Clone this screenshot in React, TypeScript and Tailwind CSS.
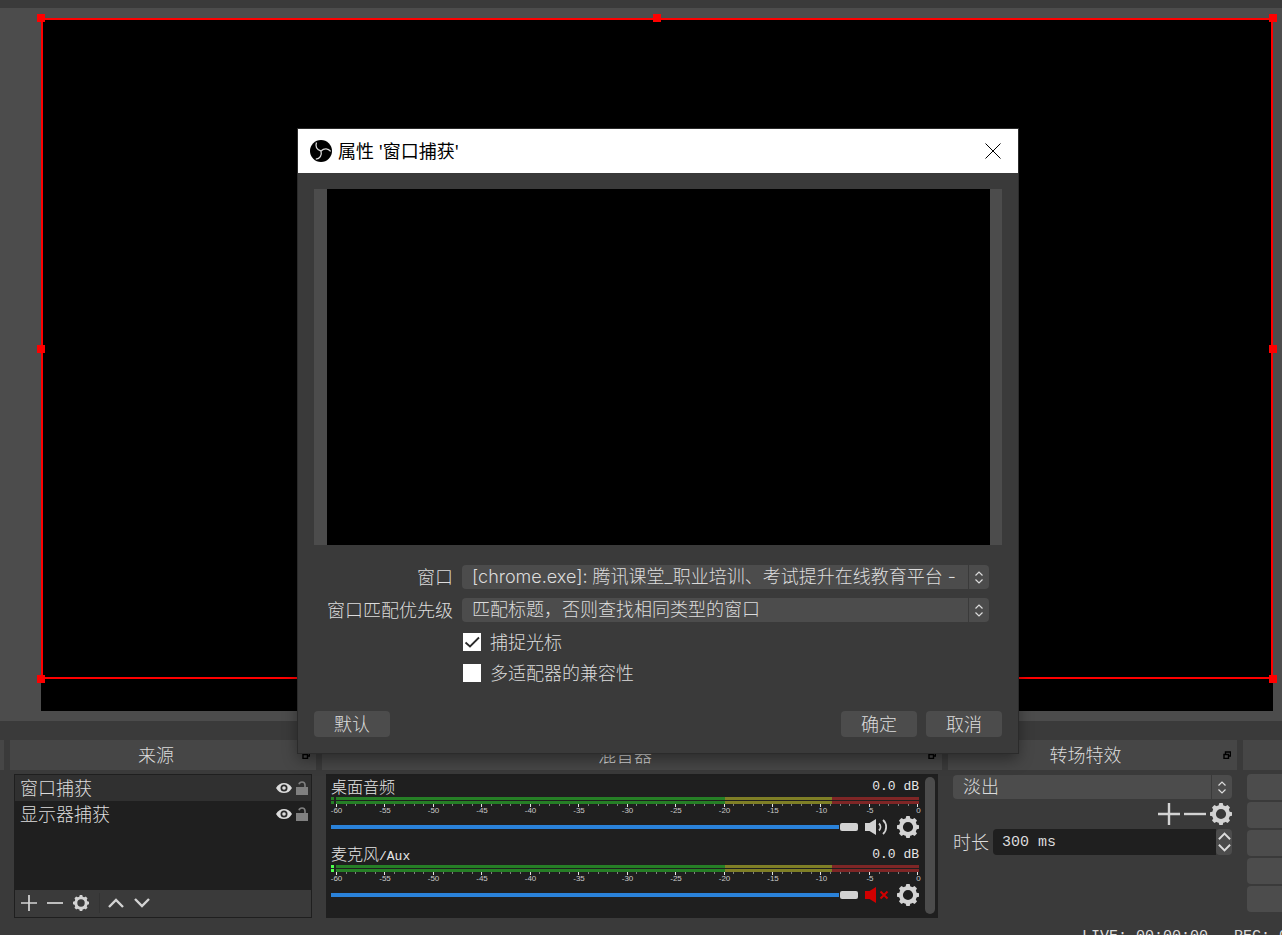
import { useState } from 'react';
import type { ReactNode } from 'react';
import { clsx } from 'clsx';

const TICKS = Array.from({ length: 61 }, (_, i) => i);
const TICK_LABELS = ['-60', '-55', '-50', '-45', '-40', '-35', '-30', '-25', '-20', '-15', '-10', '-5', '0'];

function GearIcon({ className }: { className?: string }) {
  return (
    <svg viewBox="0 0 22 22" className={className} aria-hidden="true">
      <circle cx="11" cy="11" r="7.1" fill="none" stroke="currentColor" strokeWidth="4" />
      {[0, 45, 90, 135, 180, 225, 270, 315].map((a) => (
        <path key={a} d="M8.4 3.4 9.300 0h3.400l.900 3.400z" fill="currentColor" transform={`rotate(${a} 11 11)`} />
      ))}
    </svg>
  );
}

function PlusIcon({ className }: { className?: string }) {
  return (
    <svg viewBox="0 0 22 22" className={className} aria-hidden="true">
      <path d="M11 0v22M0 11h22" stroke="currentColor" strokeWidth="2.4" />
    </svg>
  );
}

function MinusIcon({ className }: { className?: string }) {
  return (
    <svg viewBox="0 0 22 22" className={className} aria-hidden="true">
      <path d="M0 11h22" stroke="currentColor" strokeWidth="2.4" />
    </svg>
  );
}

function ChevronIcon({ up, className, weight = 2.4 }: { up?: boolean; className?: string; weight?: number }) {
  return (
    <svg viewBox="0 0 16 10" className={className} aria-hidden="true">
      <path d={up ? 'M1 9l7-7 7 7' : 'M1 1l7 7 7-7'} fill="none" stroke="currentColor" strokeWidth={weight} />
    </svg>
  );
}

function EyeIcon() {
  return (
    <svg viewBox="0 0 16 12" className="h-3 w-4" aria-hidden="true">
      <path d="M0 6C2 2.400 4.800 .9 8 .9S14 2.400 16 6c-2 3.600-4.800 5.100-8 5.100S2 9.600 0 6z" fill="#dcdcdc" />
      <circle cx="8" cy="6" r="3.500" fill="#2a2a2a" />
      <circle cx="8" cy="6" r="1.800" fill="#dcdcdc" />
    </svg>
  );
}

function UnlockIcon() {
  return (
    <svg viewBox="0 0 12 14" className="h-[14px] w-3" aria-hidden="true">
      <path d="M0 6h12v8H0z" fill="#808080" />
      <path d="M3 3.200C3.400 1.600 4.500 1 6 1c2 0 3 1 3 3v2" fill="none" stroke="#808080" strokeWidth="1.600" />
    </svg>
  );
}

function SpeakerIcon({ muted }: { muted?: boolean }) {
  return (
    <svg viewBox="0 0 24 18" className="h-[18px] w-6" aria-hidden="true">
      <path d="M0 5h4.500L11 1v16l-6.500-4H0z" fill={muted ? '#d00000' : '#d3d3d3'} />
      {muted ? (
        <path d="M15.500 5.500l7 7M22.500 5.500l-7 7" stroke="#d00000" strokeWidth="2" />
      ) : (
        <path d="M14 5.500c2 2 2 5 0 7M18 2c4.200 3.600 4.200 10.400 0 14" fill="none" stroke="#d3d3d3" strokeWidth="1.800" />
      )}
    </svg>
  );
}

function ObsLogo() {
  return (
    <svg viewBox="0 0 22 22" className="size-[22px]" aria-hidden="true">
      <circle cx="11" cy="11" r="11" fill="#000" />
      {[0, 120, 240].map((a) => (
        <path
          key={a}
          d="M6.500 2.400C5 6.200 6.600 9.800 11 11"
          fill="none"
          stroke="#d8d8d8"
          strokeWidth="1.300"
          transform={`rotate(${a} 11 11)`}
        />
      ))}
    </svg>
  );
}

function SelectBox({ id, label, value }: { id: string; label?: string; value: string }) {
  return (
    <div className="flex h-6 min-w-0 gap-px">
      <select
        id={id}
        aria-label={label}
        className="h-6 min-w-0 flex-1 appearance-none overflow-hidden rounded-l bg-[#4c4c4c] pl-[10px] font-['Inter','Noto_Sans_CJK_SC',sans-serif] text-lg leading-6 font-light whitespace-pre outline-none"
      >
        <option>{value}</option>
      </select>
      <div className="flex w-5 shrink-0 flex-col items-center justify-center gap-[3px] rounded-r bg-[#4c4c4c]">
        <ChevronIcon up className="h-[5px] w-2" />
        <ChevronIcon className="h-[5px] w-2" />
      </div>
    </div>
  );
}

function Dock({ title, children }: { title: string; children: ReactNode }) {
  return (
    <section className="flex min-w-0 flex-col gap-1">
      <header className="flex h-[30px] items-center bg-[#464646] pr-[6px]">
        <h2 className="flex-1 text-center text-lg leading-7 font-light">{title}</h2>
        <button aria-label={`${title} 浮动`} className="text-black">
          <svg viewBox="0 0 8 8" className="size-2" aria-hidden="true">
            <path d="M2.500 3V1h5v4H6M1 3.500h4.500v4H1z" fill="none" stroke="currentColor" strokeWidth="1.400" />
          </svg>
        </button>
      </header>
      <div className="flex-1 px-1">{children}</div>
    </section>
  );
}

function SourceRow({ name, active }: { name: string; active?: boolean }) {
  return (
    <li className={clsx('flex h-[26px] items-center gap-1 pr-[3px] pl-[5px]', active && 'bg-[#303030]')}>
      <span className="flex-1 text-lg leading-6 font-light">{name}</span>
      <button aria-label="可见">
        <EyeIcon />
      </button>
      <button aria-label="锁定">
        <UnlockIcon />
      </button>
    </li>
  );
}

function SourcesDock() {
  return (
    <Dock title="来源">
      <div className="flex h-36 flex-col border border-[#1f1f1f] bg-[#1f1f1f]">
        <ul className="flex-1">
          <SourceRow name="窗口捕获" active />
          <SourceRow name="显示器捕获" />
        </ul>
        <div className="flex h-[27px] items-center gap-[10px] bg-[#3a3a3a] px-[6px] pb-px text-[#d3d3d3]">
          <button aria-label="添加">
            <PlusIcon className="size-4" />
          </button>
          <button aria-label="移除">
            <MinusIcon className="size-4" />
          </button>
          <button aria-label="设置">
            <GearIcon className="size-4" />
          </button>
          <div className="-mr-[2px] h-5 w-px bg-[#333333]" />
          <button aria-label="上移">
            <ChevronIcon up className="h-[10px] w-4" />
          </button>
          <button aria-label="下移">
            <ChevronIcon className="h-[10px] w-4" />
          </button>
        </div>
      </div>
    </Dock>
  );
}

function MeterBar({ live }: { live?: boolean }) {
  return (
    <div className="flex h-[3px] gap-[2px]">
      <div className={clsx('w-[3px]', live ? 'bg-[#4cff4c]' : 'bg-[#267f26]')} />
      <div className="flex flex-1">
        <div className="grow-[40] bg-[#267f26]" />
        <div className="grow-[11] bg-[#7f7f26]" />
        <div className="grow-[9] bg-[#7f2626]" />
      </div>
    </div>
  );
}

function MixerChannel({ name, live, muted }: { name: ReactNode; live?: boolean; muted?: boolean }) {
  return (
    <div className="h-[68px]">
      <div className="flex h-[23px] items-center justify-between pt-[3px] text-base leading-5 font-light text-[#e6e6e6]">
        <span>{name}</span>
        <span className="font-['Liberation_Mono',monospace] text-[13px]">0.0 dB</span>
      </div>
      <div className="flex flex-col gap-px">
        <MeterBar live={live} />
        <MeterBar live={live} />
      </div>
      <div className="flex h-[3px] justify-between pl-[5px]">
        {TICKS.map((t) => (
          <i key={t} className={clsx('w-px', t % 5 === 0 ? 'h-[3px] bg-[#e6e6e6]' : 'h-[2px] bg-[#808080]')} />
        ))}
      </div>
      <div className="flex h-2 justify-between pl-[5px] font-['Liberation_Sans',sans-serif] text-[8px] leading-2 text-[#c8c8c8]">
        {TICK_LABELS.map((l) => (
          <span key={l} className="flex w-px justify-center">
            {l}
          </span>
        ))}
      </div>
      <div className="flex h-6 items-center text-[#d3d3d3]">
        <input
          type="range"
          aria-label="音量"
          defaultValue={100}
          className="h-3 min-w-0 flex-1 appearance-none bg-transparent bg-linear-to-r from-[#2a82da] to-[#2a82da] bg-[length:calc(100%-19px)_4px] bg-left bg-no-repeat [&::-webkit-slider-thumb]:h-2 [&::-webkit-slider-thumb]:w-[18px] [&::-webkit-slider-thumb]:appearance-none [&::-webkit-slider-thumb]:rounded-[2px] [&::-webkit-slider-thumb]:bg-[#d3d3d3]"
        />
        <button aria-label="静音" className="ml-[7px]">
          <SpeakerIcon muted={muted} />
        </button>
        <button aria-label="音频设置" className="ml-2">
          <GearIcon className="size-[22px]" />
        </button>
      </div>
    </div>
  );
}

function MixerDock() {
  return (
    <Dock title="混音器">
      <div className="flex h-36 gap-[6px] bg-[#1f1f1f] pr-[3px] pl-[5px]">
        <div className="min-w-0 flex-1">
          <MixerChannel name="桌面音频" />
          <MixerChannel
            name={
              <>
                麦克风<span className="font-['Liberation_Mono',monospace] text-[13px]">/Aux</span>
              </>
            }
            live
            muted
          />
        </div>
        <div className="mt-[3px] mb-1 w-[10px] rounded-full bg-[#4c4c4c]" />
      </div>
    </Dock>
  );
}

function TransitionsDock() {
  return (
    <Dock title="转场特效">
      <div className="flex flex-col gap-1 px-px pt-px">
        <SelectBox id="transition" label="转场特效" value="淡出" />
        <div className="flex h-[22px] justify-end gap-1 text-[#d3d3d3]">
          <button aria-label="添加转场">
            <PlusIcon className="size-[22px]" />
          </button>
          <button aria-label="移除转场">
            <MinusIcon className="size-[22px]" />
          </button>
          <button aria-label="转场设置">
            <GearIcon className="size-[22px]" />
          </button>
        </div>
        <div className="flex h-[26px] items-center">
          <label htmlFor="duration" className="w-10 shrink-0 text-lg leading-6 font-light">
            时长
          </label>
          <input
            id="duration"
            defaultValue="300 ms"
            className="h-[26px] min-w-0 flex-1 rounded-l bg-[#1f1f1f] pl-[9px] font-['Liberation_Mono',monospace] text-[15px] outline-none"
          />
          <div className="flex h-[26px] w-4 flex-col items-center justify-between rounded bg-[#4c4c4c] py-[3px]">
            <button aria-label="增加">
              <ChevronIcon up className="h-2 w-[13px]" />
            </button>
            <button aria-label="减少">
              <ChevronIcon className="h-2 w-[13px]" />
            </button>
          </div>
        </div>
      </div>
    </Dock>
  );
}

function CheckRow({ id, label, defaultChecked }: { id: string; label: string; defaultChecked?: boolean }) {
  const [checked, setChecked] = useState(!!defaultChecked);
  return (
    <div className="col-start-2 flex h-[22px] items-center gap-[9px] pl-px">
      <span className="relative flex">
        <input
          id={id}
          type="checkbox"
          checked={checked}
          onChange={(e) => setChecked(e.target.checked)}
          className="size-[18px] appearance-none bg-white"
        />
        {checked && (
          <svg viewBox="0 0 18 18" className="pointer-events-none absolute inset-0" aria-hidden="true">
            <path d="M2.500 9.500 7 13.500 16 4.500" fill="none" stroke="#2a2a2a" strokeWidth="1.800" />
          </svg>
        )}
      </span>
      <label htmlFor={id} className="text-lg leading-[22px] font-light">
        {label}
      </label>
    </div>
  );
}

function PropertiesDialog() {
  return (
    <div role="dialog" aria-labelledby="dialog-title" className="absolute top-[129px] left-[298px] w-[720px] bg-[#3a3a3a] shadow-[0_0_0_1px_#2b2b2b,0_6px_14px_rgba(0,0,0,0.4)]">
      <header className="flex h-11 items-center bg-white pr-[17px] pb-px pl-3 text-black">
        <ObsLogo />
        <h1 id="dialog-title" className="ml-[6px] flex-1 text-lg leading-10 font-normal">
          属性 '窗口捕获'
        </h1>
        <button aria-label="关闭">
          <svg viewBox="0 0 16 16" className="size-4" aria-hidden="true">
            <path d="M.5 .5l15 15M15.500 .5l-15 15" stroke="#000" strokeWidth="1" />
          </svg>
        </button>
      </header>
      <div className="p-4">
        <div className="flex h-[356px] bg-[#4c4c4c] pr-3 pl-[13px]">
          <div className="flex-1 bg-black" />
        </div>
        <form className="mt-5 grid grid-cols-[139px_1fr] gap-x-[9px] gap-y-[9px] pr-[13px]">
          <label htmlFor="window" className="text-right text-lg leading-6 font-light">
            窗口
          </label>
          <SelectBox id="window" value="[chrome.exe]: 腾讯课堂_职业培训、考试提升在线教育平台 -" />
          <label htmlFor="priority" className="text-right text-lg leading-6 font-light">
            窗口匹配优先级
          </label>
          <SelectBox id="priority" value="匹配标题，否则查找相同类型的窗口" />
          <CheckRow id="cursor" label="捕捉光标" defaultChecked />
          <CheckRow id="compat" label="多适配器的兼容性" />
        </form>
        <div className="mt-[27px] flex gap-[9px] text-lg leading-6 font-light">
          <button className="mr-auto h-[26px] w-[76px] rounded bg-[#4c4c4c]">默认</button>
          <button className="h-[26px] w-[76px] rounded bg-[#4c4c4c]">确定</button>
          <button className="h-[26px] w-[76px] rounded bg-[#4c4c4c]">取消</button>
        </div>
      </div>
    </div>
  );
}

const HANDLES = [
  'left-0 top-0',
  'left-1/2 top-0',
  'left-full top-0',
  'left-0 top-1/2',
  'left-full top-1/2',
  'left-0 top-full',
  'left-full top-full',
];

export default function App() {
  return (
    <div className="relative flex h-screen flex-col overflow-hidden bg-[#3a3a3a] font-['Noto_Sans','Noto_Sans_CJK_SC',sans-serif] text-[#dcdcdc]">
      <main className="mt-2 flex min-h-0 flex-1 bg-[#4c4c4c] pt-[10px] pr-[9px] pb-[10px] pl-[41px]">
        <div className="flex flex-1 bg-black pb-8">
          <div className="relative flex-1 border-2 border-[#ff0000]">
            <div className="absolute -inset-[2px]">
              {HANDLES.map((h) => (
                <span key={h} className={clsx('absolute size-2 -translate-1/2 bg-[#ff0000]', h)} />
              ))}
            </div>
          </div>
        </div>
      </main>

      <div className="mt-[19px] grid grid-cols-[4px_306fr_620fr_289fr_39px] gap-[6px]">
        <div className="h-[30px] bg-[#464646]" />
        <SourcesDock />
        <MixerDock />
        <TransitionsDock />
        <div className="flex flex-col gap-1">
          <div className="h-[30px] bg-[#464646]" />
          <div className="flex flex-col gap-[2px] pl-1">
            {['开始推流', '开始录制', '工作室模式', '设置', '退出'].map((l) => (
              <button key={l} aria-label={l} className="h-[26px] rounded-l bg-[#4c4c4c]" />
            ))}
          </div>
        </div>
      </div>

      <footer className="flex h-[17px] justify-end gap-[26px] overflow-hidden pt-[11px] font-['Liberation_Mono',monospace] text-[15px] leading-4 whitespace-nowrap">
        <span>LIVE: 00:00:00</span>
        <span className="w-12">REC: 00:00:00</span>
      </footer>

      <PropertiesDialog />
    </div>
  );
}
